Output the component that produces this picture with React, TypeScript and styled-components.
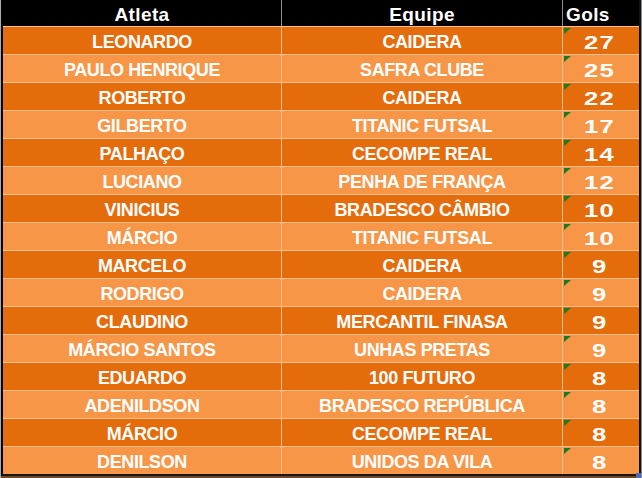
import React from "react";
import styled, { createGlobalStyle } from "styled-components";

const Global = createGlobalStyle`
  html, body { margin: 0; padding: 0; background: #ffffff; }
  #root { width: 642px; height: 478px; overflow: hidden; }
`;

const Sheet = styled.div`
  width: 642px;
  height: 478px;
  box-sizing: border-box;
  border-left: 1px solid #a7abb3;
  border-right: 1px solid #8d8f94;
  background: #6e4a2c;
  font-family: "Liberation Sans", Arial, sans-serif;
  position: relative;
`;

const Frame = styled.div`
  width: 640px;
  box-sizing: border-box;
  border-left: 2px solid #050505;
  border-right: 2px solid #121212;
  border-bottom: 2px solid #1b1410;
  display: flex;
  flex-direction: column;
`;

const HeaderRow = styled.div`
  display: grid;
  grid-template-columns: 278px 281px 77px;
  height: 26px;
  background: #000;
  color: #fff;
`;

const HeaderCell = styled.div<{ $divider?: boolean; $align?: string }>`
  box-sizing: border-box;
  border-left: ${(p) => (p.$divider ? "1px solid #8c8f96" : "none")};
  display: flex;
  align-items: center;
  justify-content: ${(p) => p.$align || "center"};
  padding-top: 4px;
  padding-left: ${(p) => (p.$align === "flex-start" ? "3px" : "0")};
  font-size: 19px;
  font-weight: bold;
  letter-spacing: 0.4px;
`;

const Row = styled.div<{ $dark: boolean }>`
  display: grid;
  grid-template-columns: 278px 281px 77px;
  height: 28px;
  box-sizing: border-box;
  border-top: 1px solid #fbc090;
  background: ${(p) => (p.$dark ? "#e46c0a" : "#f79646")};
  color: #fff;
`;

const Cell = styled.div<{ $divider?: boolean; $num?: boolean }>`
  position: relative;
  box-sizing: border-box;
  border-left: ${(p) => (p.$divider ? "1px solid #fbc090" : "none")};
  display: flex;
  align-items: center;
  justify-content: center;
  padding-top: 4px;
  padding-right: ${(p) => (p.$num ? "3px" : "0")};
  font-size: 18px;
  font-weight: bold;
  letter-spacing: -0.4px;
  white-space: nowrap;
`;

const Goals = styled.span`
  display: inline-block;
  font-size: 19px;
  letter-spacing: 1px;
  margin-right: -1px;
  transform: scaleX(1.35);
`;

const Flag = styled.span`
  position: absolute;
  left: 1px;
  top: 1px;
  width: 0;
  height: 0;
  border-top: 6px solid #1f7a1f;
  border-right: 7px solid transparent;
`;

const Handle = styled.span`
  position: absolute;
  right: 0;
  bottom: 0;
  width: 5px;
  height: 5px;
  background: #4a6bc0;
`;

const data: [string, string, number][] = [
  ["LEONARDO", "CAIDERA", 27],
  ["PAULO HENRIQUE", "SAFRA CLUBE", 25],
  ["ROBERTO", "CAIDERA", 22],
  ["GILBERTO", "TITANIC FUTSAL", 17],
  ["PALHAÇO", "CECOMPE REAL", 14],
  ["LUCIANO", "PENHA DE FRANÇA", 12],
  ["VINICIUS", "BRADESCO CÂMBIO", 10],
  ["MÁRCIO", "TITANIC FUTSAL", 10],
  ["MARCELO", "CAIDERA", 9],
  ["RODRIGO", "CAIDERA", 9],
  ["CLAUDINO", "MERCANTIL FINASA", 9],
  ["MÁRCIO SANTOS", "UNHAS PRETAS", 9],
  ["EDUARDO", "100 FUTURO", 8],
  ["ADENILDSON", "BRADESCO REPÚBLICA", 8],
  ["MÁRCIO", "CECOMPE REAL", 8],
  ["DENILSON", "UNIDOS DA VILA", 8],
];

export default function App() {
  return (
    <>
      <Global />
      <Sheet>
        <Frame>
          <HeaderRow>
            <HeaderCell>Atleta</HeaderCell>
            <HeaderCell $divider>Equipe</HeaderCell>
            <HeaderCell $divider $align="flex-start">Gols</HeaderCell>
          </HeaderRow>
          {data.map(([name, team, goals], i) => (
            <Row key={i} $dark={i % 2 === 0}>
              <Cell>{name}</Cell>
              <Cell $divider>{team}</Cell>
              <Cell $divider $num>
                <Flag />
                <Goals>{goals}</Goals>
              </Cell>
            </Row>
          ))}
        </Frame>
        <Handle />
      </Sheet>
    </>
  );
}
